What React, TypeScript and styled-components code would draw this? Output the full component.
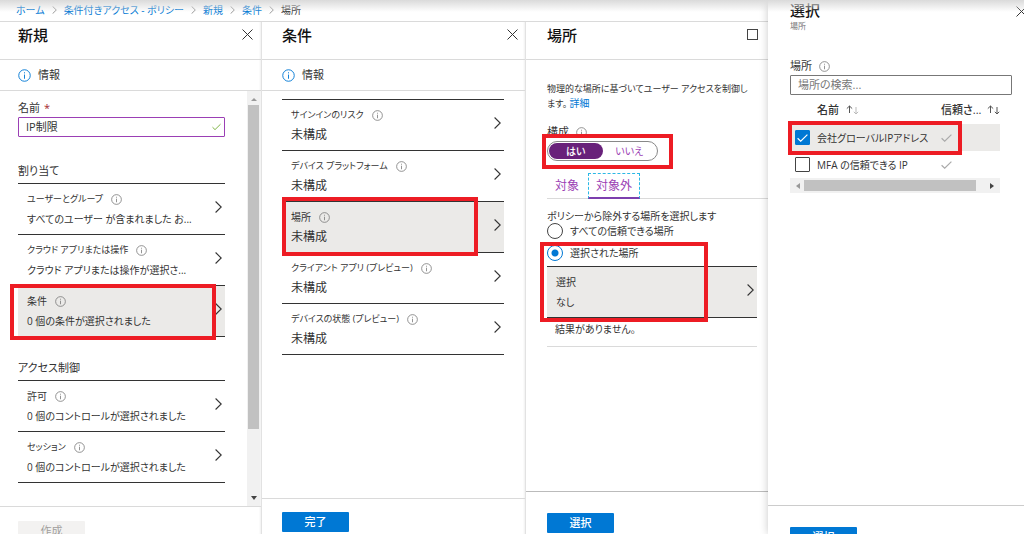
import React from "react";
import styled, { createGlobalStyle, css } from "styled-components";

const GlobalStyle = createGlobalStyle`
  *, *::before, *::after { box-sizing: border-box; }
  body {
    margin: 0;
    background: #fff;
    color: #333;
    font-family: "Open Sans", "Noto Sans CJK JP", sans-serif;
    font-size: 10px;
    line-height: 16px;
    font-feature-settings: "palt";
  }
  button, input { font: inherit; font-feature-settings: inherit; color: inherit; }
  a { color: #0078d4; text-decoration: none; }
  h1, h2, p { margin: 0; font-weight: 400; }
`;

const Page = styled.div`
  position: relative;
  display: flex;
  height: 100vh;
  overflow: hidden;
`;

const TopShade = styled.div`
  position: absolute;
  inset: 0 0 auto;
  height: 12px;
  background: linear-gradient(#dadada, rgba(255, 255, 255, 0));
  pointer-events: none;
`;

const Main = styled.main`
  flex: 3;
  min-width: 0;
  display: flex;
  flex-direction: column;
`;

const Breadcrumb = styled.nav`
  display: flex;
  align-items: center;
  gap: 7px;
  height: 22px;
  padding: 0 16px 1px;
  border-bottom: 1px solid #dadada;
  white-space: nowrap;
`;

const Blades = styled.div`
  flex: 1;
  min-height: 0;
  display: grid;
  grid-template-columns: 262fr 264fr 242fr;
`;

const Blade = styled.section`
  display: flex;
  flex-direction: column;
  min-width: 0;
  min-height: 0;
  border-right: 1px solid #e2e2e2;
  box-shadow: inset -2px 0 2px -1px #f0f0f0;
  &:last-child { border-right: 0; box-shadow: none; }
`;

const BladeHeader = styled.header<{ $left: number; $right: number }>`
  display: flex;
  justify-content: space-between;
  align-items: center;
  height: 38px;
  padding: 0 ${(p) => p.$right}px 12px ${(p) => p.$left}px;
  border-bottom: 1px solid #dadada;
`;

const Title = styled.h2`
  font-size: 15px;
  line-height: 20px;
  font-weight: 500;
  color: #111;
`;

const IconButton = styled.button`
  display: flex;
  padding: 0;
  border: 0;
  background: none;
`;

const InfoBar = styled.div<{ $left: number }>`
  display: flex;
  align-items: center;
  gap: 7px;
  height: 31px;
  padding-left: ${(p) => p.$left}px;
  border-bottom: 1px solid #dadada;
  font-size: 11px;
`;

const ScrollArea = styled.div`
  flex: 1;
  min-height: 0;
  display: flex;
`;

const BladeBody = styled.div<{ $pad: string }>`
  flex: 1;
  min-width: 0;
  min-height: 0;
  overflow: hidden;
  padding: ${(p) => p.$pad};
`;

const Footer = styled.footer<{ $height: number; $top: number; $left: number; $line?: string }>`
  flex: none;
  height: ${(p) => p.$height}px;
  padding: ${(p) => p.$top}px 0 0 ${(p) => p.$left}px;
  border-top: 1px solid ${(p) => p.$line ?? "#dadada"};
  overflow: hidden;
`;

const ActionButton = styled.button`
  display: block;
  width: 67px;
  height: 20px;
  padding: 0;
  border: 0;
  border-radius: 1px;
  background: #0078d4;
  color: #fff;
  font-size: 11px;
  line-height: 18px;
  font-weight: 500;
  &:disabled { background: #f3f2f1; color: #a19f9d; font-weight: 400; }
`;

const FieldLabel = styled.label`
  display: flex;
  align-items: center;
  gap: 7px;
  height: 18px;
  font-size: 11px;
`;

const Required = styled.span`
  color: #a4262c;
  margin-left: -3px;
`;

const InputFrame = styled.div<{ $color: string }>`
  display: flex;
  align-items: center;
  height: 20px;
  padding: 0 3px 0 7px;
  border: 1px solid ${(p) => p.$color};
  border-radius: 1px;
  background: #fff;
`;

const TextInput = styled.input`
  flex: 1;
  min-width: 0;
  height: 16px;
  padding: 0;
  border: 0;
  outline: 0;
  background: none;
  font-size: 11px;
  &::placeholder { color: #777; opacity: 1; }
`;

const GroupTitle = styled.h2<{ $top: number }>`
  margin-top: ${(p) => p.$top}px;
  height: 22px;
  font-size: 11px;
  line-height: 20px;
`;

const RowList = styled.div`
  display: flex;
  flex-direction: column;
`;

const RowWrap = styled.div`
  position: relative;
`;

const Row = styled.button<{ $active?: boolean }>`
  display: flex;
  align-items: center;
  justify-content: space-between;
  width: 100%;
  height: 52px;
  margin-bottom: -1px;
  padding: 0 3px 4px 9px;
  border: solid #333;
  border-width: 1px 0;
  background: ${(p) => (p.$active ? "#ebeae8" : "transparent")};
  text-align: left;
`;

const RowText = styled.span`
  flex: 1;
  min-width: 0;
  padding-top: 6px;
`;

const RowName = styled.span<{ $large?: boolean }>`
  display: flex;
  align-items: center;
  gap: 8px;
  font-size: ${(p) => (p.$large ? 10 : 9)}px;
  line-height: 18px;
  white-space: nowrap;
`;

const RowValue = styled.span<{ $large?: boolean }>`
  display: block;
  font-size: ${(p) => (p.$large ? 12 : 10)}px;
  line-height: 22px;
  white-space: nowrap;
`;

/* Red frame laid over the part that a step points at. */
const Marker = styled.span<{ $inset: string }>`
  position: absolute;
  inset: ${(p) => p.$inset};
  border: 4px solid #ed1c24;
  pointer-events: none;
  z-index: 1;
`;

const VScroll = styled.div`
  display: flex;
  flex-direction: column;
  align-items: center;
  justify-content: space-between;
  width: 13px;
  margin-right: 1px;
  padding: 5px 0;
  background: #f1f1f1;
`;

const VThumb = styled.div`
  flex: 1;
  width: 11px;
  margin: 3px 0 66px;
  background: #c1c1c1;
`;

const HScroll = styled.div`
  display: flex;
  align-items: center;
  height: 15px;
  padding: 0 5px;
  background: #f1f1f1;
`;

const HThumb = styled.div`
  flex: 1;
  height: 11px;
  margin: 0 13px 0 3px;
  background: #c1c1c1;
`;

const Description = styled.p`
  font-size: 9px;
  line-height: 14px;
  white-space: nowrap;
  a { font-size: 10px; }
`;

const Toggle = styled.div`
  position: relative;
  display: flex;
  width: 111px;
  height: 20px;
  padding: 1px;
  border: 1px solid #888;
  border-radius: 10px;
`;

const ToggleOption = styled.button<{ $on?: boolean }>`
  flex: 1;
  height: 16px;
  padding: 0;
  border: 0;
  border-radius: 8px;
  background: ${(p) => (p.$on ? "#68217a" : "transparent")};
  color: ${(p) => (p.$on ? "#fff" : "#9b3fb5")};
  font-weight: ${(p) => (p.$on ? 500 : 400)};
  line-height: 15px;
`;

const Tabs = styled.div`
  display: flex;
  gap: 1px;
  margin-top: 12px;
  border-bottom: 1px solid #dadada;
`;

const Tab = styled.button<{ $on?: boolean }>`
  height: 26px;
  margin-bottom: -1px;
  padding: 0 7px;
  border: 1px dashed transparent;
  background: none;
  color: #9b3fb5;
  font-size: 12px;
  ${(p) =>
    p.$on &&
    css`
      border-color: #2bb8e6;
      border-bottom: 2px solid #7c3fae;
    `}
`;

const RadioLabel = styled.label`
  display: flex;
  align-items: center;
  gap: 7px;
  height: 16px;
  white-space: nowrap;
`;

const Radio = styled.input`
  appearance: none;
  flex: none;
  width: 16px;
  height: 16px;
  margin: 0;
  border: 1px solid #444;
  border-radius: 50%;
  &:checked {
    border-color: #0078d4;
    background: radial-gradient(circle, #0078d4 3px, transparent 4px);
  }
`;

const EmptyNote = styled.p`
  height: 30px;
  padding: 4px 0 0 8px;
  border-bottom: 1px solid #dadada;
`;

const Pane = styled.aside`
  flex: 1;
  min-width: 0;
  display: flex;
  flex-direction: column;
  box-shadow: 0 0 8px rgba(0, 0, 0, 0.22);
  background: #fff;
`;

const PaneHeader = styled.header`
  display: flex;
  justify-content: space-between;
  height: 57px;
  padding: 0 0 0 22px;
  overflow: hidden;
`;

const Subtitle = styled.p`
  font-size: 8px;
  line-height: 12px;
  color: #777;
`;

const PaneClose = styled(IconButton)`
  padding-top: 6px;
  margin-right: -3px;
`;

const PaneBody = styled.div`
  flex: 1;
  min-height: 0;
  padding: 0 12px 0 22px;
`;

const ListBox = styled.div`
  position: relative;
  margin-right: 12px;
`;

const Table = styled.table`
  width: 100%;
  table-layout: fixed;
  border-collapse: collapse;
  th, td { padding: 0; text-align: left; white-space: nowrap; }
  th { height: 29px; font-weight: 500; font-size: 11px; }
  td { height: 27px; }
`;

const CheckCol = styled.col`width: 27px;`;
const TrustCol = styled.col`width: 59px;`;

const TableRow = styled.tr<{ $active?: boolean }>`
  background: ${(p) => (p.$active ? "#ebeae8" : "transparent")};
`;

const HeadCell = styled.div<{ $spread?: boolean }>`
  display: flex;
  align-items: center;
  justify-content: ${(p) => (p.$spread ? "space-between" : "flex-start")};
  gap: ${(p) => (p.$spread ? 0 : 7)}px;
  svg { flex: none; }
`;

const CheckBox = styled.input`
  appearance: none;
  display: block;
  width: 15px;
  height: 15px;
  margin: 0 0 0 5px;
  border: 1px solid #444;
  border-radius: 1px;
  background: #fff;
  &:checked { border-color: #0078d4; background: #0078d4; }
`;

const CheckWrap = styled.div`
  position: relative;
  svg { position: absolute; left: 7px; top: 4px; pointer-events: none; }
`;

const ConfigBlock = styled.div`
  margin-top: 12px;
`;

const ExcludeBlock = styled.div`
  padding: 9px 11px 0 0;
`;

const ExcludeTitle = styled.p`
  height: 15px;
`;

const SelectedGroup = styled.div`
  position: relative;
  margin-top: 6px;
`;

const SelectedRow = styled.div`
  margin-top: 5px;
`;

const Info = ({ size = 11, color = "#777" }: { size?: number; color?: string }) => (
  <svg width={size} height={size} viewBox="0 0 14 14" fill="none" stroke={color} aria-hidden="true">
    <circle cx="7" cy="7" r="6.2" />
    <path d="M7 6v4.5M7 3.5v1.2" />
  </svg>
);

const Cross = () => (
  <svg width="11" height="11" viewBox="0 0 11 11" stroke="#333" aria-hidden="true">
    <path d="M.5.5l10 10M10.5.5l-10 10" />
  </svg>
);

const Chevron = ({ w = 7, h = 12, color = "#333" }: { w?: number; h?: number; color?: string }) => (
  <svg width={w} height={h} viewBox="0 0 7 12" fill="none" stroke={color} strokeWidth={w < 7 ? 1.3 : 1.1} aria-hidden="true">
    <path d="M.6.5L6.2 6 .6 11.5" />
  </svg>
);

const Tick = ({ color, w = 11 }: { color: string; w?: number }) => (
  <svg width={w} height="8" viewBox="0 0 11 8" fill="none" stroke={color} strokeWidth="1.2" aria-hidden="true">
    <path d="M.6 4.2L3.7 7.2 10.4.6" />
  </svg>
);

const SortArrows = ({ light }: { light?: boolean }) => (
  <svg width="13" height="10" viewBox="0 0 13 10" fill="none" stroke="#555" aria-hidden="true">
    <path d="M3.5 8V1M.8 3.6L3.5 1l2.7 2.6" />
    <path d="M10 2v7M7.8 6.8L10 9l2.2-2.2" stroke={light ? "#bbb" : "#555"} />
  </svg>
);

const Arrow = ({ d, color }: { d: string; color: string }) => (
  <svg width="6" height="6" viewBox="0 0 6 6" fill={color} aria-hidden="true">
    <path d={d} />
  </svg>
);

type RowProps = {
  name: string;
  value: string;
  active?: boolean;
  info?: boolean;
  largeName?: boolean;
  largeValue?: boolean;
  marker?: string;
};

const SettingRow = ({ name, value, active, info = true, largeName, largeValue, marker }: RowProps) => (
  <RowWrap>
    <Row type="button" $active={active}>
      <RowText>
        <RowName $large={largeName}>
          {name}
          {info && <Info />}
        </RowName>
        <RowValue $large={largeValue}>{value}</RowValue>
      </RowText>
      <Chevron />
    </Row>
    {marker && <Marker $inset={marker} />}
  </RowWrap>
);

const ConfigField = () => (
  <ConfigBlock>
    <FieldLabel as="div">構成 <Info /></FieldLabel>
    <Toggle role="group" aria-label="構成">
      <ToggleOption type="button" $on>はい</ToggleOption>
      <ToggleOption type="button">いいえ</ToggleOption>
      <Marker $inset="-8px -16px -9px -6px" />
    </Toggle>
  </ConfigBlock>
);

const ExcludeSection = () => (
  <ExcludeBlock>
    <ExcludeTitle>ポリシーから除外する場所を選択します</ExcludeTitle>
    <RadioLabel><Radio type="radio" name="scope" />すべての信頼できる場所</RadioLabel>
    <SelectedGroup>
      <RadioLabel><Radio type="radio" name="scope" defaultChecked />選択された場所</RadioLabel>
      <SelectedRow>
        <SettingRow name="選択" value="なし" info={false} active largeName />
      </SelectedRow>
      <Marker $inset="-3px 49px -4px -7px" />
    </SelectedGroup>
    <EmptyNote>結果がありません。</EmptyNote>
  </ExcludeBlock>
);

const crumbs = ["ホーム", "条件付きアクセス - ポリシー", "新規", "条件"];

const conditions: RowProps[] = [
  { name: "サインインのリスク", value: "未構成" },
  { name: "デバイス プラットフォーム", value: "未構成" },
  { name: "場所", value: "未構成", active: true, largeName: true, marker: "-4px 26px -4px 0" },
  { name: "クライアント アプリ (プレビュー)", value: "未構成" },
  { name: "デバイスの状態 (プレビュー)", value: "未構成" },
];

export default function App() {
  return (
    <>
      <GlobalStyle />
      <Page>
        <Main>
          <Breadcrumb aria-label="階層">
            {crumbs.map((c) => (
              <React.Fragment key={c}>
                <a href="#">{c}</a>
                <Chevron w={5} h={8} color="#888" />
              </React.Fragment>
            ))}
            <span>場所</span>
          </Breadcrumb>
          <Blades>
            <Blade>
              <BladeHeader $left={18} $right={8}>
                <Title>新規</Title>
                <IconButton type="button" aria-label="閉じる"><Cross /></IconButton>
              </BladeHeader>
              <InfoBar $left={18}><Info size={13} color="#0078d4" />情報</InfoBar>
              <ScrollArea>
                <BladeBody $pad="8px 22px 0 18px">
                  <FieldLabel htmlFor="name">名前 <Required>*</Required></FieldLabel>
                  <InputFrame $color="#9b3fb5">
                    <TextInput id="name" defaultValue="IP制限" />
                    <Tick color="#7cb342" w={9} />
                  </InputFrame>
                  <GroupTitle $top={24}>割り当て</GroupTitle>
                  <RowList>
                    <SettingRow name="ユーザーとグループ" value="すべてのユーザー が含まれました お..." />
                    <SettingRow name="クラウド アプリまたは操作" value="クラウド アプリまたは操作が選択さ..." />
                    <SettingRow name="条件" value="0 個の条件が選択されました" active largeName marker="-1px 9px -4px -8px" />
                  </RowList>
                  <GroupTitle $top={22}>アクセス制御</GroupTitle>
                  <RowList>
                    <SettingRow name="許可" value="0 個のコントロールが選択されました" largeName />
                    <SettingRow name="セッション" value="0 個のコントロールが選択されました" />
                  </RowList>
                </BladeBody>
                <VScroll>
                  <Arrow d="M0 5L3 2l3 3z" color="#999" />
                  <VThumb />
                  <Arrow d="M0 1l3 4 3-4z" color="#444" />
                </VScroll>
              </ScrollArea>
              <Footer $height={28} $top={14} $left={18}>
                <ActionButton type="button" disabled>作成</ActionButton>
              </Footer>
            </Blade>

            <Blade>
              <BladeHeader $left={20} $right={7}>
                <Title>条件</Title>
                <IconButton type="button" aria-label="閉じる"><Cross /></IconButton>
              </BladeHeader>
              <InfoBar $left={20}><Info size={13} color="#0078d4" />情報</InfoBar>
              <BladeBody $pad="8px 21px 0 20px">
                <RowList>
                  {conditions.map((c) => <SettingRow key={c.name} {...c} largeValue />)}
                </RowList>
              </BladeBody>
              <Footer $height={36} $top={13} $left={20}>
                <ActionButton type="button">完了</ActionButton>
              </Footer>
            </Blade>

            <Blade>
              <BladeHeader $left={21} $right={10}>
                <Title>場所</Title>
                <IconButton type="button" aria-label="最大化">
                  <svg width="11" height="11" viewBox="0 0 11 11" fill="none" stroke="#444">
                    <rect x=".5" y=".5" width="10" height="10" />
                  </svg>
                </IconButton>
              </BladeHeader>
              <BladeBody $pad="22px 0 0 21px">
                <Description>
                  物理的な場所に基づいてユーザー アクセスを制御し<br />
                  ます。 <a href="#">詳細</a>
                </Description>
                <ConfigField />
                <Tabs>
                  <Tab type="button">対象</Tab>
                  <Tab type="button" $on>対象外</Tab>
                </Tabs>
                <ExcludeSection />
              </BladeBody>
              <Footer $height={43} $top={21} $left={21} $line="#bbb">
                <ActionButton type="button">選択</ActionButton>
              </Footer>
            </Blade>
          </Blades>
        </Main>

        <Pane>
          <PaneHeader>
            <div>
              <Title>選択</Title>
              <Subtitle>場所</Subtitle>
            </div>
            <PaneClose type="button" aria-label="閉じる"><Cross /></PaneClose>
          </PaneHeader>
          <PaneBody>
            <FieldLabel htmlFor="search">場所 <Info /></FieldLabel>
            <InputFrame $color="#777">
              <TextInput id="search" placeholder="場所の検索..." />
            </InputFrame>
            <ListBox>
              <Table>
                <colgroup><CheckCol /><col /><TrustCol /></colgroup>
                <thead>
                  <tr>
                    <th aria-label="選択" />
                    <th><HeadCell>名前 <SortArrows light /></HeadCell></th>
                    <th><HeadCell $spread>信頼さ... <SortArrows /></HeadCell></th>
                  </tr>
                </thead>
                <tbody>
                  <TableRow $active>
                    <td>
                      <CheckWrap>
                        <CheckBox id="loc1" type="checkbox" defaultChecked />
                        <Tick color="#fff" />
                      </CheckWrap>
                    </td>
                    <td><label htmlFor="loc1">会社グローバルIPアドレス</label></td>
                    <td><Tick color="#aaa" /></td>
                  </TableRow>
                  <TableRow>
                    <td><CheckBox id="loc2" type="checkbox" /></td>
                    <td><label htmlFor="loc2">MFA の信頼できる IP</label></td>
                    <td><Tick color="#aaa" /></td>
                  </TableRow>
                </tbody>
              </Table>
              <HScroll>
                <Arrow d="M5 0L1 3l4 3z" color="#999" />
                <HThumb />
                <Arrow d="M1 0l4 3-4 3z" color="#444" />
              </HScroll>
              <Marker $inset="26px 38px 38px -2px" />
            </ListBox>
          </PaneBody>
          <Footer $height={29} $top={21} $left={22} $line="#ccc">
            <ActionButton type="button">選択</ActionButton>
          </Footer>
        </Pane>
        <TopShade />
      </Page>
    </>
  );
}
